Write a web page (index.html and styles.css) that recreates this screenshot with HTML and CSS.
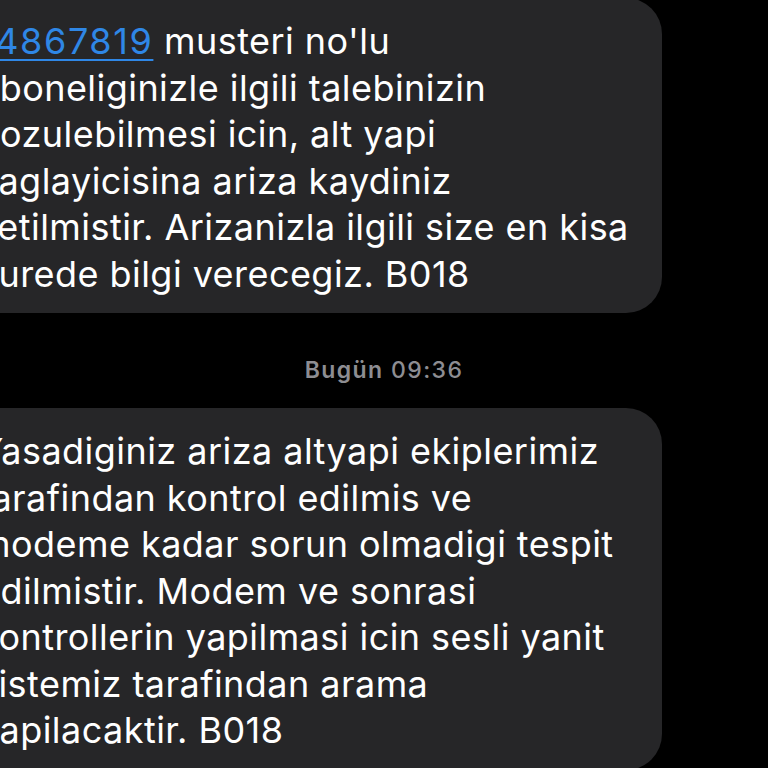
FILE: index.html
```html
<html lang="tr">
<head>
  <meta charset="UTF-8" />
  <meta name="viewport" content="width=device-width, initial-scale=1.0"/>
  <title>Mesajlar</title>
  <link rel="stylesheet" href="styles.css">
</head>
<body>
  <div id="chat">
    <div class="bubble first">
      <span class="line"><a class="num" href="#">14867819</a> musteri no'lu</span>
      <span class="line">aboneliginizle ilgili talebinizin</span>
      <span class="line">cozulebilmesi icin, alt yapi</span>
      <span class="line">saglayicisina ariza kaydiniz</span>
      <span class="line">iletilmistir. Arizanizla ilgili size en kisa</span>
      <span class="line">surede bilgi verecegiz. B018</span>
    </div>

    <div class="stamp"><b>Bugün</b> 09:36</div>

    <div class="bubble">
      <span class="line">Yasadiginiz ariza altyapi ekiplerimiz</span>
      <span class="line">tarafindan kontrol edilmis ve</span>
      <span class="line">modeme kadar sorun olmadigi tespit</span>
      <span class="line">edilmistir. Modem ve sonrasi</span>
      <span class="line">kontrollerin yapilmasi icin sesli yanit</span>
      <span class="line">sistemiz tarafindan arama</span>
      <span class="line">yapilacaktir. B018</span>
    </div>
  </div>
</body>
</html>
```

FILE: styles.css
```css
* {
  box-sizing: border-box;
  margin: 0;
  padding: 0;
}

body {
  background-color: #000;
  height: 768px;
  overflow: hidden;
  font-family: Inter, 'Liberation Sans', sans-serif;
}

#chat {
  display: flex;
  flex-direction: column;
}

.bubble {
  background-color: #262628;
  color: #fff;
  width: 703px;
  margin-left: -41px;
  padding: 20px 20px 16px 20px;
  border-radius: 36px;
  font-size: 36px;
  line-height: 46.5px;
  letter-spacing: 0.45px;
}

.bubble.first {
  margin-top: -2px;
}

.line {
  display: block;
  white-space: nowrap;
}

.num {
  color: #2f87e6;
  letter-spacing: 1.6px;
  text-decoration: underline;
  text-decoration-thickness: 2px;
  text-underline-offset: 5px;
}

.stamp {
  margin: 44px 0 25px;
  text-align: center;
  color: #8d8d92;
  font-size: 23px;
  line-height: 26px;
  font-weight: 500;
  letter-spacing: 1.4px;
}

.stamp b {
  font-weight: 600;
}
```
